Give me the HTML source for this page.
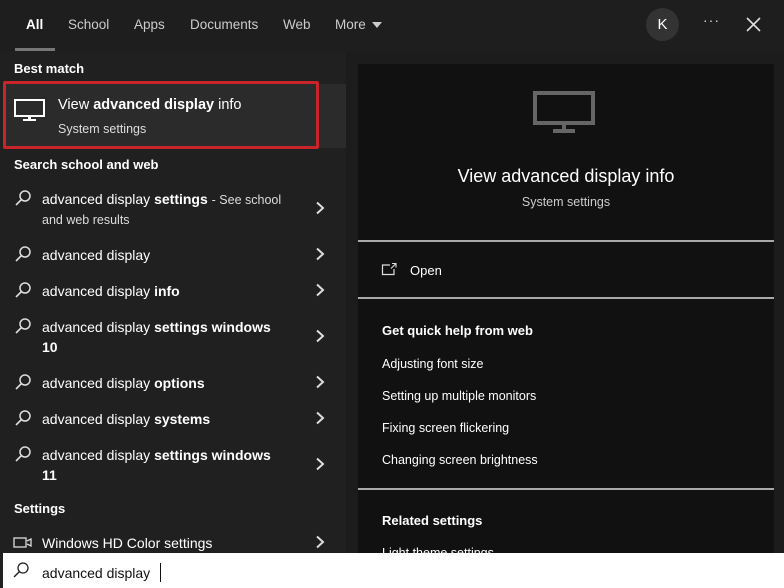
<!DOCTYPE html>
<html><head><meta charset="utf-8"><style>
*{margin:0;padding:0;box-sizing:border-box}
body{width:784px;height:588px;overflow:hidden;background:#202020;font-family:"Liberation Sans",sans-serif;color:#fff;position:relative}
.a{position:absolute;white-space:nowrap}
.t{font-size:14px;color:#fff}
.h{font-size:13px;font-weight:bold;color:#fff}
.s{font-size:12.5px;color:#ddd}
b{font-weight:bold}
.chev{position:absolute;left:314px;width:12px;height:14px}
.si{position:absolute;left:14px;width:18px;height:18px}
.line{position:absolute;left:358px;width:416px;height:2px;background:#a9a9a9}
</style></head><body>
<div class="a" style="left:0;top:0;width:784px;height:52px;background:#1e1e1e"></div>
<div class="a t" style="left:26px;top:17px;font-size:13.5px;font-weight:bold">All</div>
<div class="a t" style="left:68px;top:17px;font-size:13.5px;color:#ccc">School</div>
<div class="a t" style="left:134px;top:17px;font-size:13.5px;color:#ccc">Apps</div>
<div class="a t" style="left:190px;top:17px;font-size:13.5px;color:#ccc">Documents</div>
<div class="a t" style="left:283px;top:17px;font-size:13.5px;color:#ccc">Web</div>
<div class="a t" style="left:335px;top:17px;font-size:13.5px;color:#ccc">More</div>
<svg class="a" style="left:371px;top:21px" width="12" height="8"><path d="M1 1h10L6 7z" fill="#ccc"/></svg>
<div class="a" style="left:15px;top:48px;width:40px;height:3px;background:#777"></div>
<div class="a" style="left:646px;top:8px;width:33px;height:33px;border-radius:50%;background:#333;text-align:center;line-height:33px;font-size:15px">K</div>
<div class="a" style="left:703px;top:12px;font-size:14px;color:#ddd;letter-spacing:1px">···</div>
<svg class="a" style="left:746px;top:17px" width="15" height="15"><path d="M1 1L14 14M14 1L1 14" stroke="#ddd" stroke-width="1.6"/></svg>

<!-- right panel -->
<div class="a" style="left:346px;top:52px;width:438px;height:501px;background:#1c1c1c"></div>
<div class="a" style="left:358px;top:64px;width:416px;height:489px;background:#111"></div>
<svg class="a" style="left:533px;top:91px" width="62" height="45"><rect x="2" y="2" width="58" height="30" fill="none" stroke="#666" stroke-width="4"/><rect x="29" y="32" width="4" height="8" fill="#666"/><rect x="20" y="38" width="22" height="4" fill="#666"/></svg>
<div class="a" style="left:358px;top:166px;width:416px;text-align:center;font-size:18px">View advanced display info</div>
<div class="a" style="left:358px;top:195px;width:416px;text-align:center;font-size:12.5px;color:#ccc">System settings</div>
<div class="line" style="top:240px"></div>
<svg class="a" style="left:381px;top:262px" width="18" height="14"><path d="M9 3H1.5V12.5H13V7" fill="none" stroke="#ddd" stroke-width="1.2"/><path d="M11 1.5h4v4M15 1.5l-5 5" fill="none" stroke="#ddd" stroke-width="1.1"/></svg>
<div class="a t" style="left:410px;top:263px;font-size:13px">Open</div>
<div class="line" style="top:297px"></div>
<div class="a h" style="left:382px;top:323px">Get quick help from web</div>
<div class="a s" style="left:382px;top:357px;color:#fff">Adjusting font size</div>
<div class="a s" style="left:382px;top:389px;color:#fff">Setting up multiple monitors</div>
<div class="a s" style="left:382px;top:421px;color:#fff">Fixing screen flickering</div>
<div class="a s" style="left:382px;top:453px;color:#fff">Changing screen brightness</div>
<div class="line" style="top:488px"></div>
<div class="a h" style="left:382px;top:513px">Related settings</div>
<div class="a s" style="left:382px;top:546px;color:#fff">Light theme settings</div>

<!-- left -->
<div class="a h" style="left:14px;top:61px">Best match</div>
<div class="a" style="left:3px;top:84px;width:343px;height:64px;background:#2b2b2b"></div>
<div class="a" style="left:3px;top:81px;width:316px;height:68px;border:3px solid #c8242a;border-radius:2px"></div>
<svg class="a" style="left:14px;top:99px" width="32" height="24"><rect x="1" y="1" width="29" height="16" fill="none" stroke="#fff" stroke-width="2"/><rect x="14" y="17" width="3" height="4" fill="#fff"/><rect x="9" y="20" width="13" height="2" fill="#fff"/></svg>
<div class="a t" style="left:58px;top:97px;font-size:14.5px">View <b>advanced display</b> info</div>
<div class="a s" style="left:58px;top:122px">System settings</div>
<div class="a h" style="left:14px;top:157px">Search school and web</div>

<svg width="0" height="0" style="position:absolute"><defs><symbol id="mg" viewBox="0 0 18 18"><circle cx="11" cy="7" r="5" fill="none" stroke="#ddd" stroke-width="1.5"/><path d="M7.5 10.5L2 16" stroke="#ddd" stroke-width="1.6"/></symbol><symbol id="cv" viewBox="0 0 12 14"><path d="M3 1.5L9 7L3 12.5" fill="none" stroke="#ddd" stroke-width="2"/></symbol></defs></svg>

<svg class="si" style="top:189px"><use href="#mg"/></svg>
<div class="a t" style="left:42px;top:191px">advanced display <b>settings</b> <span style="font-size:12.5px;color:#ddd">- See school</span></div>
<div class="a s" style="left:42px;top:213px">and web results</div>
<svg class="chev" style="top:201px"><use href="#cv"/></svg>

<svg class="si" style="top:245px"><use href="#mg"/></svg>
<div class="a t" style="left:42px;top:247px">advanced display</div>
<svg class="chev" style="top:247px"><use href="#cv"/></svg>

<svg class="si" style="top:281px"><use href="#mg"/></svg>
<div class="a t" style="left:42px;top:283px">advanced display <b>info</b></div>
<svg class="chev" style="top:283px"><use href="#cv"/></svg>

<svg class="si" style="top:317px"><use href="#mg"/></svg>
<div class="a t" style="left:42px;top:319px">advanced display <b>settings windows</b></div>
<div class="a t" style="left:42px;top:339px"><b>10</b></div>
<svg class="chev" style="top:329px"><use href="#cv"/></svg>

<svg class="si" style="top:373px"><use href="#mg"/></svg>
<div class="a t" style="left:42px;top:375px">advanced display <b>options</b></div>
<svg class="chev" style="top:375px"><use href="#cv"/></svg>

<svg class="si" style="top:409px"><use href="#mg"/></svg>
<div class="a t" style="left:42px;top:411px">advanced display <b>systems</b></div>
<svg class="chev" style="top:411px"><use href="#cv"/></svg>

<svg class="si" style="top:445px"><use href="#mg"/></svg>
<div class="a t" style="left:42px;top:447px">advanced display <b>settings windows</b></div>
<div class="a t" style="left:42px;top:467px"><b>11</b></div>
<svg class="chev" style="top:457px"><use href="#cv"/></svg>

<div class="a h" style="left:14px;top:501px">Settings</div>
<svg class="a" style="left:13px;top:537px" width="20" height="12"><rect x="1" y="1" width="12" height="9" fill="none" stroke="#ddd" stroke-width="1.3"/><path d="M14 4l4-2v7l-4-2" fill="none" stroke="#ddd" stroke-width="1.3"/></svg>
<div class="a t" style="left:42px;top:535px">Windows HD Color settings</div>
<svg class="chev" style="top:535px"><use href="#cv"/></svg>

<!-- search box -->
<div class="a" style="left:3px;top:553px;width:781px;height:35px;background:#fff"></div>
<svg class="a" style="left:12px;top:561px" width="18" height="18"><circle cx="11" cy="7" r="5" fill="none" stroke="#222" stroke-width="1.3"/><path d="M7.5 10.5L2 16" stroke="#222" stroke-width="1.4"/></svg>
<div class="a" style="left:42px;top:565px;font-size:14px;color:#111">advanced display</div>
<div class="a" style="left:160px;top:563px;width:1px;height:19px;background:#111"></div>
</body></html>
